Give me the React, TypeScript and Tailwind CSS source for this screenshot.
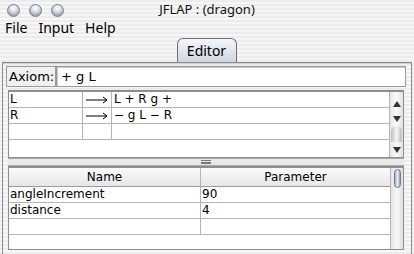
import React from 'react';

const stripes =
  'bg-[repeating-linear-gradient(180deg,#ececec_0px,#ececec_2px,#f6f6f6_2px,#f6f6f6_4px)]';

const Light = () => (
  <div className="w-[13px] h-[13px] rounded-full border border-[#7d8088] bg-[radial-gradient(circle_at_50%_30%,#ffffff_0%,#dfe2e8_35%,#9ea4ae_75%,#c9cdd4_100%)]" />
);

const rules = [
  { left: 'L', right: 'L + R g +' },
  { left: 'R', right: '− g L − R' },
  { left: '', right: '' },
];

const params = [
  { name: 'angleIncrement', value: '90' },
  { name: 'distance', value: '4' },
  { name: '', value: '' },
];

const Arrow = ({ up }: { up?: boolean }) => (
  <div className="h-[15px] flex items-center justify-center">
    <svg width="8" height="6" viewBox="0 0 8 6">
      {up ? <path d="M0 6 L4 0 L8 6 Z" fill="#333" /> : <path d="M0 0 L4 6 L8 0 Z" fill="#333" />}
    </svg>
  </div>
);

export default function App() {
  return (
    <div
      className={`w-[414px] h-[254px] overflow-hidden flex flex-col text-black text-[13px] ${stripes}`}
      style={{ fontFamily: '"Lucida Grande", "Noto Sans", "DejaVu Sans", sans-serif' }}
    >
      {/* Title bar */}
      <div className="h-[19px] flex items-center pl-[7px] relative">
        <div className="flex gap-[9px] pt-[1px]">
          <Light />
          <Light />
          <Light />
        </div>
        <div className="absolute left-0 right-0 top-[1px] text-center text-[13px] leading-[17px] text-[#111]">JFLAP : (dragon)</div>
      </div>

      {/* Menu */}
      <div className="h-[17px] flex items-center gap-[11px] pl-[5px] text-[14px] leading-[16px]">
        <span>File</span>
        <span>Input</span>
        <span>Help</span>
      </div>

      {/* Tabs */}
      <div className="h-[26px] flex justify-center items-end">
        <div className="ml-[-1px] w-[60px] h-[24px] rounded-t-[6px] border border-b-0 border-[#6f6f6f] bg-[linear-gradient(180deg,#f4f6fa_0%,#cfd6e0_100%)] flex items-center justify-center text-[14px]">
          Editor
        </div>
      </div>

      {/* Panel */}
      <div className="flex-1 mx-[2px] border-t border-l border-r border-[#8a8a8a] shadow-[inset_0_1px_0_#cfcfcf] flex flex-col px-[2px] pt-[3px] font-['DejaVu_Sans',sans-serif]">
        {/* Axiom */}
        <div className="flex h-[21px] mx-[1px] text-[13px]">
          <div className="w-[50px] border border-[#9a9a9a] bg-[#f0f0f0] flex items-center pl-[2px]">Axiom:</div>
          <div className="flex-1 mr-[2px] border border-[#9a9a9a] bg-white flex items-center pl-[4px] shadow-[inset_1px_1px_0_#c8c8c8]">
            + g L
          </div>
        </div>

        {/* Rules table */}
        <div className="mt-[3px] ml-[3px] mr-[5px] h-[68px] border border-[#8d8d8d] border-t-[2px] bg-white flex">
          <div className="flex-1 flex flex-col">
            {rules.map((r, i) => (
              <div key={i} className="h-[16px] flex border-b border-[#b5b5b5] text-[12px] leading-[15px]">
                <div className="w-[74px] border-r border-[#b5b5b5] pl-[1px]">{r.left}</div>
                <div className="w-[29px] border-r border-[#b5b5b5] flex items-center justify-center">
                  {r.left && (
                    <svg width="22" height="8" viewBox="0 0 22 8">
                      <path d="M0 4 H21 M17 1 L21 4 L17 7" stroke="#000" strokeWidth="1" fill="none" />
                    </svg>
                  )}
                </div>
                <div className="flex-1 pl-[2px]">{r.right}</div>
              </div>
            ))}
          </div>
          <div className="w-[14px] border-l border-[#b5b5b5] bg-[linear-gradient(90deg,#e6e6e6,#fafafa,#e0e0e0)] flex flex-col pt-[4px]">
            <Arrow up />
            <Arrow />
            <div className="h-[16px] mx-[1px] rounded-t-full bg-[linear-gradient(90deg,#bfbfbf,#f4f4f4,#bcbcbc)]" />
            <Arrow />
          </div>
        </div>

        {/* Split divider */}
        <div className="h-[8px] ml-[3px] mr-[5px] border-t border-b border-[#a9a9a9] bg-[#e9e9e9] flex items-center justify-center">
          <div className="w-[10px] h-[4px] flex flex-col justify-between">
            <div className="h-px bg-[#777]" />
            <div className="h-px bg-[#777]" />
            <div className="h-px bg-[#777]" />
          </div>
        </div>

        {/* Params table */}
        <div className="flex-1 ml-[3px] mr-[5px] mb-[4px] border border-[#8d8d8d] border-t-[2px] bg-white flex">
          <div className="flex-1 flex flex-col">
            <div className="h-[19px] flex border-b border-[#9b9b9b] bg-[linear-gradient(180deg,#fbfbfb,#e6e6e6)] text-[12px]">
              <div className="w-[192px] border-r border-[#b5b5b5] text-center leading-[18px]">Name</div>
              <div className="flex-1 text-center leading-[18px]">Parameter</div>
            </div>
            {params.map((p, i) => (
              <div key={i} className="h-[16px] flex border-b border-[#b5b5b5] text-[12px] leading-[15px]">
                <div className="w-[192px] border-r border-[#b5b5b5] pl-[1px]">{p.name}</div>
                <div className="flex-1 pl-[1px]">{p.value}</div>
              </div>
            ))}
          </div>
          <div className="w-[13px] border-l border-[#b5b5b5] bg-[linear-gradient(90deg,#e4e4e4,#f8f8f8,#dedede)] flex justify-center pt-[1px]">
            <div className="w-[7px] h-[19px] rounded-full border border-[#6d7a8a] bg-[linear-gradient(90deg,#9fb0c4,#e8eef5,#8fa0b4)]" />
          </div>
        </div>
      </div>
    </div>
  );
}
